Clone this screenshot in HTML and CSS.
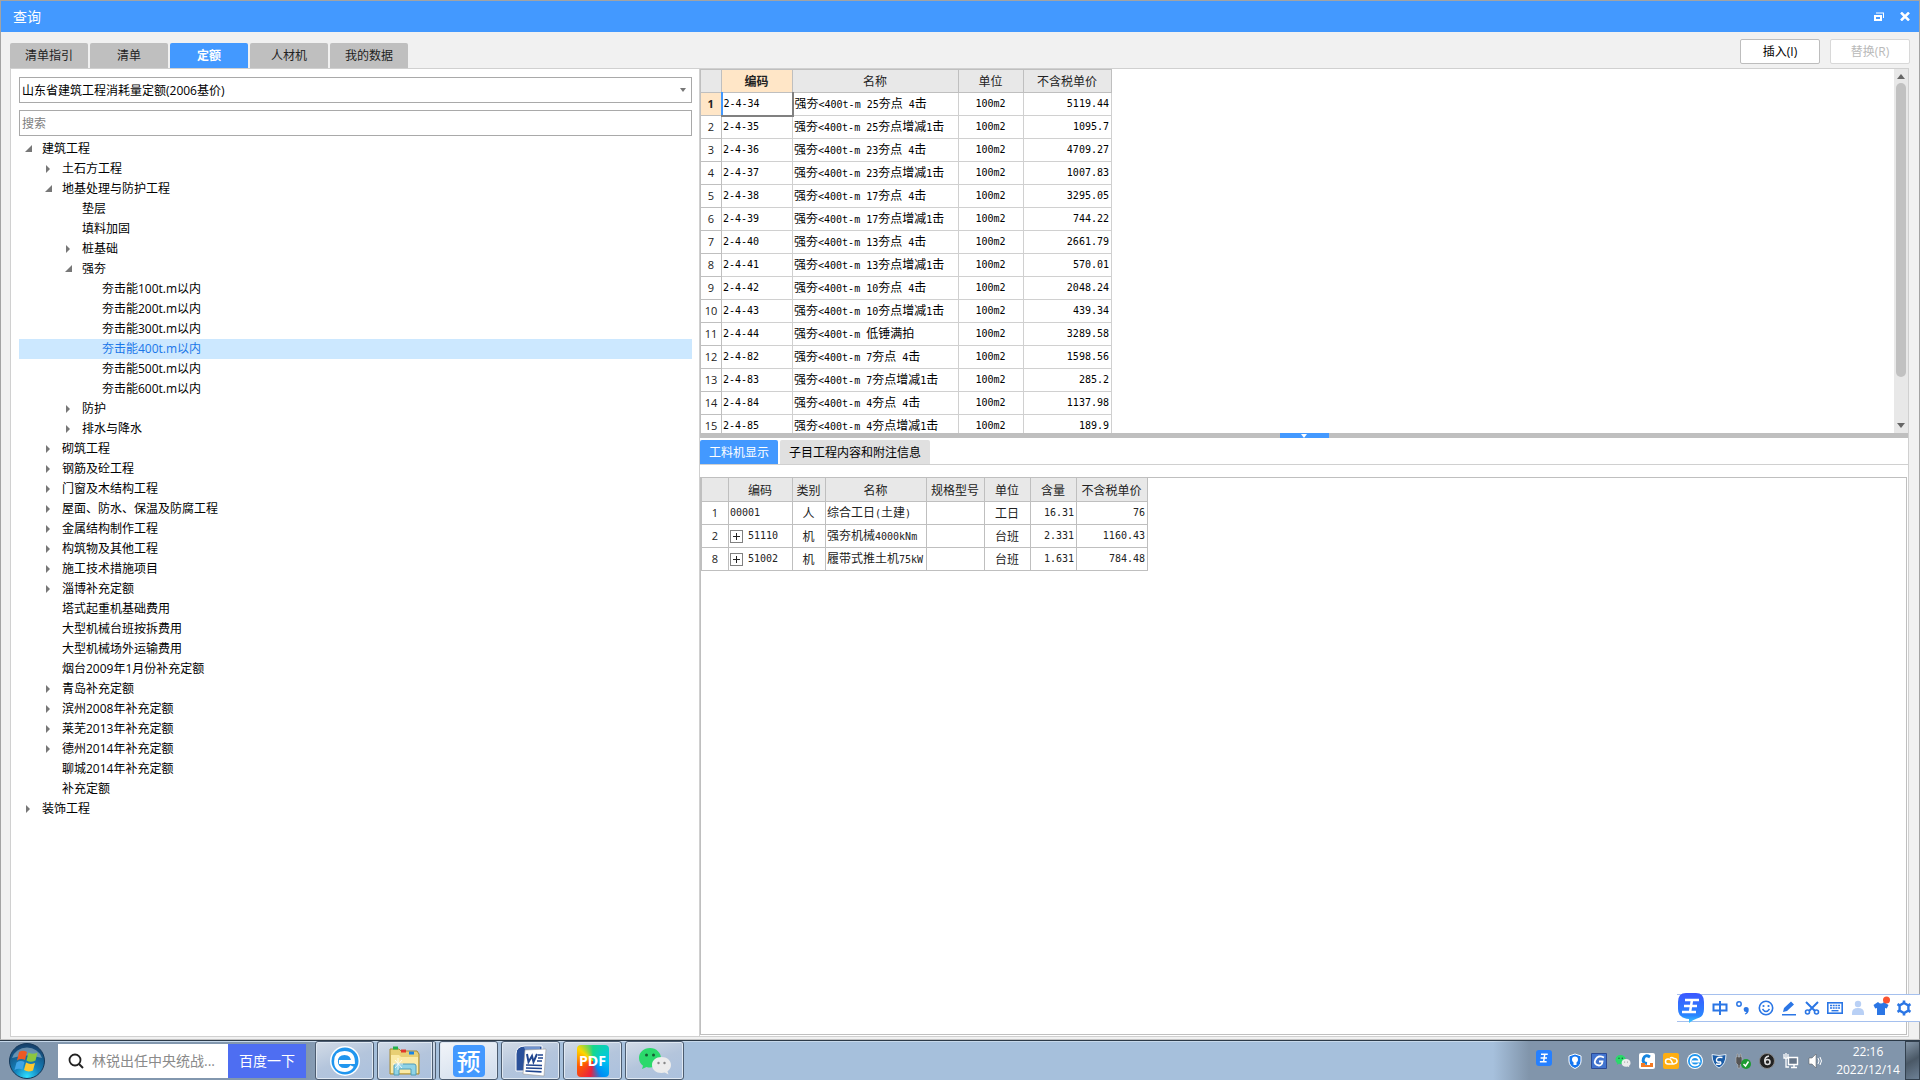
FILE: index.html
```html
<!DOCTYPE html>
<html lang="zh-CN">
<head>
<meta charset="utf-8">
<title>查询</title>
<link rel="stylesheet" href="styles.css">
</head>
<body>
<svg class="defs" aria-hidden="true">
  <symbol id="open" viewBox="0 0 8 8"><path d="M7 0v7H0z"/></symbol>
  <symbol id="shut" viewBox="0 0 8 8"><path d="M1 0l4 4-4 4z"/></symbol>
  <symbol id="wechat" viewBox="0 0 34 28">
    <path fill="#2bd96b" d="M12 1C5.500 1 1 5.500 1 11c0 3.500 1.600 6 4 7.800L4 22l4.500-2c1.100.4 2.300.5 3.500.5C18.500 20.500 23 16 23 11S18.500 1 12 1z"/>
    <circle cx="8.500" cy="8" r="1.500" fill="#155f33"/><circle cx="15.500" cy="8" r="1.500" fill="#155f33"/>
    <path fill="#ececec" d="M23.500 10C18 10 14 13.500 14 18s4 8 9.500 8c1.200 0 2.300-.2 3.300-.5l3.700 2-1-3.200c2.200-1.500 3.500-3.600 3.500-6.300 0-4.500-4-8-9.500-8z"/>
    <circle cx="20.500" cy="16" r="1.200" fill="#888"/><circle cx="26.500" cy="16" r="1.200" fill="#888"/>
  </symbol>
  <symbol id="wang" viewBox="0 0 16 16"><path d="M4 3h9M3.500 8h8.500M2.500 13h9M9 3L7.500 13" fill="none" stroke="#fff" stroke-width="2"/></symbol>
</svg>

<div class="window">
  <header class="titlebar">
    <h1>查询</h1>
    <div class="window-buttons">
      <button aria-label="还原"><svg width="10" height="9" viewBox="0 0 10 9"><path d="M2 1h8M9.500 1v5" fill="none" stroke="#fff" stroke-width="1"/><path d="M1 4h6v4H1z" fill="none" stroke="#fff" stroke-width="2"/></svg></button>
      <button aria-label="关闭"><svg width="10" height="9" viewBox="0 0 10 9"><path d="M1 0.500l8 8M9 0.500l-8 8" stroke="#fff" stroke-width="2.500"/></svg></button>
    </div>
  </header>

  <div class="toolbar">
    <nav class="tabs">
      <button>清单指引</button><button>清单</button><button class="active">定额</button><button>人材机</button><button>我的数据</button>
    </nav>
    <div class="actions">
      <button>插入(I)</button><button disabled>替换(R)</button>
    </div>
  </div>

  <main class="panes">
    <section class="left">
      <div class="combo">
        <select aria-label="定额库"><option>山东省建筑工程消耗量定额(2006基价)</option></select>
        <svg width="6" height="4" viewBox="0 0 6 4"><path d="M0 0h6L3 4z" fill="#777"/></svg>
      </div>
      <input class="search" type="text" placeholder="搜索" aria-label="搜索">
      <ul class="tree">
        <li class="l0"><svg><use href="#open"/></svg>建筑工程</li>
        <li class="l1"><svg><use href="#shut"/></svg>土石方工程</li>
        <li class="l1"><svg><use href="#open"/></svg>地基处理与防护工程</li>
        <li class="l2"><svg></svg>垫层</li>
        <li class="l2"><svg></svg>填料加固</li>
        <li class="l2"><svg><use href="#shut"/></svg>桩基础</li>
        <li class="l2"><svg><use href="#open"/></svg>强夯</li>
        <li class="l3"><svg></svg>夯击能100t.m以内</li>
        <li class="l3"><svg></svg>夯击能200t.m以内</li>
        <li class="l3"><svg></svg>夯击能300t.m以内</li>
        <li class="l3 selected"><svg></svg>夯击能400t.m以内</li>
        <li class="l3"><svg></svg>夯击能500t.m以内</li>
        <li class="l3"><svg></svg>夯击能600t.m以内</li>
        <li class="l2"><svg><use href="#shut"/></svg>防护</li>
        <li class="l2"><svg><use href="#shut"/></svg>排水与降水</li>
        <li class="l1"><svg><use href="#shut"/></svg>砌筑工程</li>
        <li class="l1"><svg><use href="#shut"/></svg>钢筋及砼工程</li>
        <li class="l1"><svg><use href="#shut"/></svg>门窗及木结构工程</li>
        <li class="l1"><svg><use href="#shut"/></svg>屋面、防水、保温及防腐工程</li>
        <li class="l1"><svg><use href="#shut"/></svg>金属结构制作工程</li>
        <li class="l1"><svg><use href="#shut"/></svg>构筑物及其他工程</li>
        <li class="l1"><svg><use href="#shut"/></svg>施工技术措施项目</li>
        <li class="l1"><svg><use href="#shut"/></svg>淄博补充定额</li>
        <li class="l1"><svg></svg>塔式起重机基础费用</li>
        <li class="l1"><svg></svg>大型机械台班按拆费用</li>
        <li class="l1"><svg></svg>大型机械场外运输费用</li>
        <li class="l1"><svg></svg>烟台2009年1月份补充定额</li>
        <li class="l1"><svg><use href="#shut"/></svg>青岛补充定额</li>
        <li class="l1"><svg><use href="#shut"/></svg>滨州2008年补充定额</li>
        <li class="l1"><svg><use href="#shut"/></svg>莱芜2013年补充定额</li>
        <li class="l1"><svg><use href="#shut"/></svg>德州2014年补充定额</li>
        <li class="l1"><svg></svg>聊城2014年补充定额</li>
        <li class="l1"><svg></svg>补充定额</li>
        <li class="l0"><svg><use href="#shut"/></svg>装饰工程</li>
      </ul>
    </section>

    <section class="right">
      <div class="quota">
        <div class="quota-grid">
          <table class="grid grid-top">
            <colgroup><col class="w-no"><col class="w-code"><col class="w-name"><col class="w-unit"><col class="w-price"></colgroup>
            <thead><tr><th></th><th class="current">编码</th><th>名称</th><th>单位</th><th>不含税单价</th></tr></thead>
            <tbody>
              <tr><th class="current">1</th><td class="mono focus">2-4-34</td><td>强夯<i>&lt;400t-m 25</i>夯点<i> 4</i>击</td><td class="mono mid">100m2</td><td class="mono num">5119.44</td></tr>
              <tr><th>2</th><td class="mono">2-4-35</td><td>强夯<i>&lt;400t-m 25</i>夯点增减<i>1</i>击</td><td class="mono mid">100m2</td><td class="mono num">1095.7</td></tr>
              <tr><th>3</th><td class="mono">2-4-36</td><td>强夯<i>&lt;400t-m 23</i>夯点<i> 4</i>击</td><td class="mono mid">100m2</td><td class="mono num">4709.27</td></tr>
              <tr><th>4</th><td class="mono">2-4-37</td><td>强夯<i>&lt;400t-m 23</i>夯点增减<i>1</i>击</td><td class="mono mid">100m2</td><td class="mono num">1007.83</td></tr>
              <tr><th>5</th><td class="mono">2-4-38</td><td>强夯<i>&lt;400t-m 17</i>夯点<i> 4</i>击</td><td class="mono mid">100m2</td><td class="mono num">3295.05</td></tr>
              <tr><th>6</th><td class="mono">2-4-39</td><td>强夯<i>&lt;400t-m 17</i>夯点增减<i>1</i>击</td><td class="mono mid">100m2</td><td class="mono num">744.22</td></tr>
              <tr><th>7</th><td class="mono">2-4-40</td><td>强夯<i>&lt;400t-m 13</i>夯点<i> 4</i>击</td><td class="mono mid">100m2</td><td class="mono num">2661.79</td></tr>
              <tr><th>8</th><td class="mono">2-4-41</td><td>强夯<i>&lt;400t-m 13</i>夯点增减<i>1</i>击</td><td class="mono mid">100m2</td><td class="mono num">570.01</td></tr>
              <tr><th>9</th><td class="mono">2-4-42</td><td>强夯<i>&lt;400t-m 10</i>夯点<i> 4</i>击</td><td class="mono mid">100m2</td><td class="mono num">2048.24</td></tr>
              <tr><th>10</th><td class="mono">2-4-43</td><td>强夯<i>&lt;400t-m 10</i>夯点增减<i>1</i>击</td><td class="mono mid">100m2</td><td class="mono num">439.34</td></tr>
              <tr><th>11</th><td class="mono">2-4-44</td><td>强夯<i>&lt;400t-m </i>低锤满拍</td><td class="mono mid">100m2</td><td class="mono num">3289.58</td></tr>
              <tr><th>12</th><td class="mono">2-4-82</td><td>强夯<i>&lt;400t-m 7</i>夯点<i> 4</i>击</td><td class="mono mid">100m2</td><td class="mono num">1598.56</td></tr>
              <tr><th>13</th><td class="mono">2-4-83</td><td>强夯<i>&lt;400t-m 7</i>夯点增减<i>1</i>击</td><td class="mono mid">100m2</td><td class="mono num">285.2</td></tr>
              <tr><th>14</th><td class="mono">2-4-84</td><td>强夯<i>&lt;400t-m 4</i>夯点<i> 4</i>击</td><td class="mono mid">100m2</td><td class="mono num">1137.98</td></tr>
              <tr><th>15</th><td class="mono">2-4-85</td><td>强夯<i>&lt;400t-m 4</i>夯点增减<i>1</i>击</td><td class="mono mid">100m2</td><td class="mono num">189.9</td></tr>
            </tbody>
          </table>
        </div>
        <div class="scrollbar">
          <svg width="8" height="5" viewBox="0 0 8 5"><path d="M4 0l4 5H0z"/></svg>
          <div class="track"><div class="thumb"></div></div>
          <svg width="8" height="5" viewBox="0 0 8 5"><path d="M0 0h8L4 5z"/></svg>
        </div>
      </div>
      <div class="splitter"><button aria-label="折叠"><svg width="6" height="4" viewBox="0 0 6 4"><path d="M0 0h6L3 4z" fill="#fff"/></svg></button></div>
      <nav class="subtabs"><button class="active">工料机显示</button><button>子目工程内容和附注信息</button></nav>
      <div class="detail">
        <table class="grid grid-bottom">
          <colgroup><col class="b-no"><col class="b-code"><col class="b-kind"><col class="b-name"><col class="b-spec"><col class="b-unit"><col class="b-qty"><col class="b-price"></colgroup>
          <thead><tr><th></th><th>编码</th><th>类别</th><th>名称</th><th>规格型号</th><th>单位</th><th>含量</th><th>不含税单价</th></tr></thead>
          <tbody>
            <tr><th>1</th><td class="mono">00001</td><td class="mid">人</td><td>综合工日<i>(</i>土建<i>)</i></td><td></td><td class="mid">工日</td><td class="mono num">16.31</td><td class="mono num">76</td></tr>
            <tr><th>2</th><td class="mono"><button class="plus" aria-label="展开"></button>51110</td><td class="mid">机</td><td>强夯机械<i>4000kNm</i></td><td></td><td class="mid">台班</td><td class="mono num">2.331</td><td class="mono num">1160.43</td></tr>
            <tr><th>8</th><td class="mono"><button class="plus" aria-label="展开"></button>51002</td><td class="mid">机</td><td>履带式推土机<i>75kW</i></td><td></td><td class="mid">台班</td><td class="mono num">1.631</td><td class="mono num">784.48</td></tr>
          </tbody>
        </table>
      </div>
    </section>
  </main>
</div>

<div class="ime">
  <svg class="ime-logo" width="28" height="32" viewBox="0 0 28 32">
    <defs><linearGradient id="ig" x1="0" y1="0" x2="0" y2="1"><stop offset="0" stop-color="#3b57ff"/><stop offset=".75" stop-color="#2a86ff"/><stop offset="1" stop-color="#3bd0ff"/></linearGradient></defs>
    <path fill="url(#ig)" d="M9 1h10q8 0 8 9v7q0 8-7 9.500-4 1-8 4.500v-4Q1 26 1 17v-7q0-9 8-9z"/>
    <path d="M8 8h14M7 14h13M5 20h14M15 8l-2 12" fill="none" stroke="#fff" stroke-width="2.500"/>
  </svg>
  <svg viewBox="0 0 16 16"><path d="M1.500 4.500h13v6h-13zM8 1v14" fill="none" stroke="#2b76e5" stroke-width="2"/></svg>
  <svg viewBox="0 0 16 16"><circle cx="4" cy="4" r="2.200" fill="none" stroke="#2b76e5" stroke-width="1.500"/><path fill="#2b76e5" d="M11 7a2.700 2.700 0 012.700 3c0 2.500-1.500 4-3.500 4.500l-.4-1c1-.4 1.500-1 1.600-1.500A2.500 2.500 0 1111 7z"/></svg>
  <svg viewBox="0 0 16 16"><circle cx="8" cy="8" r="6.700" fill="none" stroke="#2b76e5" stroke-width="1.600"/><circle cx="5.500" cy="6" r="1.100" fill="#2b76e5"/><circle cx="10.500" cy="6" r="1.100" fill="#2b76e5"/><path d="M4.500 9q3.500 5 7 0" fill="none" stroke="#2b76e5" stroke-width="1.500"/></svg>
  <svg viewBox="0 0 16 16"><path fill="#2b76e5" d="M2 12l1-4 7-6.500 3 3L6 11zM1 14h14v1.600H1z"/></svg>
  <svg viewBox="0 0 16 16"><path d="M2 2l9 9M14 2l-9 9" stroke="#2b76e5" stroke-width="2"/><circle cx="3.500" cy="12" r="2" fill="none" stroke="#2b76e5" stroke-width="1.600"/><circle cx="12.500" cy="12" r="2" fill="none" stroke="#2b76e5" stroke-width="1.600"/></svg>
  <svg viewBox="0 0 16 16"><rect x=".8" y="2.800" width="14.400" height="10.400" fill="none" stroke="#2b76e5" stroke-width="1.600"/><path d="M3 5.500h10M3 8h10" stroke="#2b76e5" stroke-width="1.500" stroke-dasharray="2 .7"/><path d="M4.500 10.700h7" stroke="#2b76e5" stroke-width="1.400"/></svg>
  <svg viewBox="0 0 16 16"><circle cx="8" cy="4" r="3.200" fill="#b9d0f5"/><path fill="#b9d0f5" d="M2 15v-2q0-5 6-5t6 5v2z"/></svg>
  <svg viewBox="0 0 16 16"><path fill="#2b76e5" d="M5 2q3 3 6 0l4.500 3-1.700 3.500L12 8v7H4V8l-1.800.5L.5 5z"/><circle cx="13.500" cy="0" r="3.500" fill="#fb5430"/></svg>
  <svg viewBox="0 0 16 16"><path d="M8 3l4.400 2.500v5L8 13l-4.400-2.500v-5z" fill="none" stroke="#2b76e5" stroke-width="2.400"/><path d="M8 .5v2M8 13.500v2M1.500 4.200l2 1.200M12.500 10.600l2 1.200M14.500 4.200l-2 1.200M3.500 10.600l-2 1.200" stroke="#2b76e5" stroke-width="2.600"/></svg>
</div>

<footer class="taskbar">
  <button class="start" aria-label="开始"><svg width="38" height="38" viewBox="0 0 38 38">
    <defs><radialGradient id="orb" cx=".5" cy=".95" r=".9"><stop offset="0" stop-color="#2fe0ff"/><stop offset=".4" stop-color="#1483bd"/><stop offset="1" stop-color="#17426d"/></radialGradient></defs>
    <circle cx="19" cy="19" r="17.500" fill="url(#orb)" stroke="#14385a"/><path d="M4 16a15.500 14 0 0130 0q-15-5-30 0z" fill="#fff" opacity=".35"/>
    <path fill="#ee5a24" d="M11 10q4-2.500 8 0l-2 8q-4-2-8 .5z"/><path fill="#8cc63f" d="M20.500 10.500q4 2.500 9 0l-2 8q-5 2.500-9 0z"/><path fill="#3fa4e6" d="M8.500 20.500q4-2.500 8-.5l-2 7.500q-4-1.500-8 .5z"/><path fill="#fdc82f" d="M18 20.500q4 2.500 9 .5l-2 7.500q-5 2-9-.5z"/>
  </svg></button>
  <div class="baidu">
    <svg width="16" height="16" viewBox="0 0 16 16"><circle cx="7" cy="7" r="5.500" fill="none" stroke="#222" stroke-width="1.800"/><path d="M11 11l4 4" stroke="#222" stroke-width="2"/></svg>
    <input type="text" placeholder="林锐出任中央统战..." aria-label="百度搜索">
    <button>百度一下</button>
  </div>
  <div class="apps">
    <button aria-label="浏览器"><svg width="32" height="32" viewBox="0 0 32 32"><circle cx="16" cy="16" r="15" fill="#fff"/><circle cx="16" cy="16" r="13.500" fill="#2196ee"/><path d="M10 17h14q0-9-8.500-9T7 16.500 16 25q5 0 7-4" fill="none" stroke="#fff" stroke-width="3.800"/></svg></button>
    <button class="stacked" aria-label="资源管理器"><svg width="34" height="30" viewBox="0 0 34 30"><path fill="#e8cf74" stroke="#a98b35" d="M2 3h9l2 2h16l2 3v20H2z"/><path d="M5 2h5" stroke="#21b14c" stroke-width="3"/><path d="M13 5h5" stroke="#e1382b" stroke-width="3"/><path d="M21 7h5" stroke="#1784e8" stroke-width="3"/><path fill="#fbeaa6" d="M3 9h8l2 2h17v16H3z"/><path fill="#8fd3e6" stroke="#4f9cb8" d="M6 29V20q0-2 2-2h18q2 0 2 2v9h-5v-6H11v6z"/><path d="M10 12v12M5 18h10M7 14l7 8M14 14l-7 8" stroke="#fff" stroke-width=".8"/></svg></button>
    <button class="yu"><span>预</span></button>
    <button aria-label="Word"><svg width="32" height="32" viewBox="0 0 32 32"><path fill="#2a5099" stroke="#fff" d="M1 26V9q0-8 9-8h17v25z"/><path fill="#6f93cf" d="M9 2h16v3H10z"/><path fill="#fff" stroke="#999" stroke-width=".6" d="M10 5l21-1-2 27-21-2z"/><path d="M12 9l1.500 8 3.500-6 1.500 6L22 9" fill="none" stroke="#21468f" stroke-width="2"/><path d="M23 10h5M23 13h5M22 16h5M11 20l16 .5M11 23l16 .5M10.500 26l16 .8" stroke="#21468f" stroke-width="1.700"/></svg></button>
    <button class="pdf"><span>PDF</span></button>
    <button aria-label="微信"><svg width="34" height="28"><use href="#wechat"/></svg></button>
  </div>
  <div class="tray">
    <svg class="lift" viewBox="0 0 16 16"><rect width="16" height="16" rx="3" fill="#2680ff"/><use href="#wang" x="2" y="2" width="12" height="12"/></svg>
    <svg viewBox="0 0 16 16"><path fill="#1677f0" stroke="#fff" d="M8 1l6 2v5q0 5-6 7.500Q2 13 2 8V3z"/><circle cx="8" cy="6.500" r="3" fill="#fff"/><path d="M6.500 7h3v5h-3z" fill="#fff"/></svg>
    <svg viewBox="0 0 16 16"><path fill="#4274cf" stroke="#2c4a94" d="M.5.500h15v15H.5z"/><path d="M13 4.500Q7 1.500 4.500 6.500T8 12.500q3 0 3.500-4H8" fill="none" stroke="#fff" stroke-width="1.800"/></svg>
    <svg viewBox="0 0 16 16"><use href="#wechat" y="1" width="16" height="14"/></svg>
    <svg viewBox="0 0 16 16"><rect width="16" height="16" rx="2" fill="#fff"/><path d="M11 4Q6 1 4.500 5.500T8 10.500" fill="none" stroke="#1685df" stroke-width="3"/><path fill="#f47a23" d="M2 10h4v2h5v-2h3v4H2z"/></svg>
    <svg viewBox="0 0 16 16"><rect width="16" height="16" rx="2" fill="#ffae12"/><path d="M10 11H5a2.500 2.500 0 010-5q3 0 4 3t3 1.500a2.500 2.500 0 00-1-5Q9 4 7 5" fill="none" stroke="#fff" stroke-width="1.500"/></svg>
    <svg viewBox="0 0 16 16"><circle cx="8" cy="8" r="8" fill="#fff"/><circle cx="8" cy="8" r="7" fill="#2196ee"/><path d="M5 8.500h7.500Q12 4 8 4T3.700 8 8 12.500q3 0 4-2" fill="none" stroke="#fff" stroke-width="1.800"/></svg>
    <svg viewBox="0 0 16 16"><path fill="#1b5da8" stroke="#dce9f5" d="M1 1.500q7 2 14 0 0 10-7 13.500Q1 11.500 1 1.500z"/><path d="M11.500 4.500Q6 3.500 5.500 6.500t4 2.500Q11 12 5 11" fill="none" stroke="#fff" stroke-width="1.400"/></svg>
    <svg viewBox="0 0 16 16"><path fill="#555" stroke="#bbb" stroke-width=".6" d="M2 4V1h1v3h2V1h1v3h1v6l-2 2v3H3v-3l-2-2V4z"/><circle cx="11" cy="11" r="5" fill="#1d9b31"/><path d="M8.500 11l2 2 3-4.500" fill="none" stroke="#fff" stroke-width="1.500"/></svg>
    <svg viewBox="0 0 16 16"><circle cx="8" cy="8" r="7.500" fill="#222" stroke="#888"/><path d="M10 3Q5 4 6 9" fill="none" stroke="#ddd" stroke-width="1.500"/><circle cx="8.500" cy="9" r="2.500" fill="none" stroke="#ddd" stroke-width="1.500"/></svg>
    <svg viewBox="0 0 16 16"><path d="M5.500 4.500h9v7h-9zM8 14.500h6M11 12v2" fill="#667689" stroke="#fff" stroke-width="1.400"/><path d="M1 1v4h4V1M3 0v4M3 5v9h3" fill="none" stroke="#fff" stroke-width="1.300"/></svg>
    <svg viewBox="0 0 16 16"><path fill="#fff" stroke="#555" stroke-width=".5" d="M2 5h3l4-4v14l-4-4H2z"/><path d="M11 5q2 3 0 6M13 4q3 4 0 8" fill="none" stroke="#fff"/></svg>
    <time><span>22:16</span><span>2022/12/14</span></time>
    <button class="desktop" aria-label="显示桌面"></button>
  </div>
</footer>
</body>
</html>
```
FILE: styles.css
```css
* { box-sizing: border-box; }
body {
  margin: 0;
  height: 100vh;
  display: flex;
  flex-direction: column;
  overflow: hidden;
  background: #f1f1f1;
  color: #000;
  font: 12px/20px "Open Sans", "Noto Sans CJK SC", sans-serif;
}
button, input, select { font: inherit; margin: 0; padding: 0; border: 0; border-radius: 0; }
svg { display: block; flex: none; }
.defs { position: absolute; width: 0; height: 0; }

/* window frame */
.window {
  flex: 1;
  min-height: 0;
  display: flex;
  flex-direction: column;
  border: 1px solid #a3a3a3;
  border-bottom-color: #c4c4c4;
}
.titlebar {
  height: 31px;
  display: flex;
  align-items: center;
  justify-content: space-between;
  padding: 0 9px 0 12px;
  background: #4399ff;
  color: #fff;
}
.titlebar h1 { margin: 0; font-size: 14px; font-weight: 400; }
.window-buttons { display: flex; gap: 16px; }
.window-buttons button { background: none; }

.toolbar {
  height: 36px;
  display: flex;
  justify-content: space-between;
  align-items: flex-end;
  padding: 0 9px;
}
.tabs { display: flex; gap: 2px; }
.tabs button {
  width: 78px;
  height: 25px;
  background: #bfbfbf;
  color: #222;
  border-radius: 2px 2px 0 0;
}
.tabs .active { background: #4399ff; color: #fff; font-weight: 700; }
.actions { display: flex; gap: 10px; padding-bottom: 4px; }
.actions button {
  width: 80px;
  height: 25px;
  background: #fff;
  border: 1px solid #bdbdbd;
  border-radius: 2px;
}
.actions button:disabled { color: #b9b9b9; border-color: #d8d8d8; }

/* panes */
.panes { flex: 1; min-height: 0; display: flex; margin: 0 10px 2px 9px; border: 1px solid #d0d0d0; background: #fff; }
.left { width: 689px; flex: none; padding: 8px 7px 0 8px; border-right: 1px solid #d0d0d0; }
.combo { display: flex; align-items: center; border: 1px solid #a9a9a9; height: 26px; padding-right: 5px; margin-bottom: 7px; }
.combo select { flex: 1; appearance: none; background: none; padding: 1px 0 0 2px; color: #000; }
.search { width: 100%; height: 26px; border: 1px solid #a9a9a9; padding-left: 2px; margin-bottom: 3px; display: block; }
.search::placeholder { color: #808080; }
.tree { margin: 0; padding: 0; list-style: none; }
.tree li { display: flex; align-items: center; height: 20px; padding-left: 6px; white-space: nowrap; }
.tree svg { width: 8px; height: 8px; margin-right: 9px; fill: #777; }
.tree .l1 { padding-left: 26px; }
.tree .l2 { padding-left: 46px; }
.tree .l3 { padding-left: 66px; }
.tree .selected { background: #cce8ff; color: #1a76e8; }

.right { flex: 1; min-width: 0; display: flex; flex-direction: column; }
.quota { flex: 0 0 364px; display: flex; overflow: hidden; }
.quota-grid { flex: 1; overflow: hidden; }
.scrollbar {
  width: 14px;
  display: flex;
  flex-direction: column;
  align-items: center;
  padding: 5px 0;
  gap: 4px;
  background: #e8e8e8;
  fill: #666;
}
.track { flex: 1; }
.thumb { width: 10px; height: 294px; border-radius: 5px; background: #c1c1c1; }
.splitter { height: 5px; display: flex; justify-content: center; background: #bfbfbf; }
.splitter button { width: 49px; height: 5px; display: flex; justify-content: center; align-items: center; background: #4399ff; }
.subtabs { display: flex; gap: 2px; padding-top: 2px; border-bottom: 1px solid #d0d0d0; }
.subtabs button { height: 24px; padding: 1px 9px 0; background: #e0e0e0; border-radius: 2px 2px 0 0; }
.subtabs .active { background: #4399ff; color: #fff; }
.detail { flex: 1; margin: 12px 1px 1px 0; border: 1px solid #bfbfbf; }

/* data grids */
.grid { table-layout: fixed; border-collapse: collapse; font: 12px/14px "Noto Sans CJK SC", sans-serif; }
.grid tr { height: 23px; }
.grid th, .grid td { padding: 0 2px 0 1px; border: 1px solid #d0d0d0; white-space: nowrap; overflow: hidden; text-align: left; }
.grid th { text-align: center; font-weight: 400; color: #222; border-color: #bfbfbf; }
.grid tbody th { padding: 0; font: 11px/14px "Open Sans", sans-serif; }
.grid thead th { background: #e8e8e8; }
.grid tbody .current, .grid thead .current { background: #ffe6c7; font-weight: 700; }
.grid .mono, .grid i { font-family: "DejaVu Sans Mono", monospace; font-size: 10px; font-style: normal; white-space: pre; }
.grid .mid { text-align: center; }
.grid .num { text-align: right; }
.grid .focus { border: 2px solid #808080; border-top: 1px solid #4399ff; border-left: 2px solid #4399ff; }
.grid-top { width: 411px; }
.grid-bottom { width: 446px; margin: -1px 0 0; }
.grid-bottom thead tr { height: 24px; }
.grid-bottom td { border-color: #bfbfbf; color: #222; }
.w-no { width: 21px; } .w-code { width: 71px; } .w-name { width: 166px; } .w-unit { width: 65px; } .w-price { width: 88px; }
.b-no { width: 27px; } .b-code { width: 64px; } .b-kind { width: 33px; } .b-name { width: 101px; }
.b-spec { width: 58px; } .b-unit { width: 46px; } .b-qty { width: 46px; } .b-price { width: 71px; }
.plus {
  width: 13px;
  height: 13px;
  margin-right: 5px;
  vertical-align: middle;
  border: 1px solid #808080;
  background:
    linear-gradient(#222, #222) center / 7px 1px no-repeat,
    linear-gradient(#222, #222) center / 1px 7px no-repeat,
    #fff;
}

/* floating input-method bar */
.ime {
  position: absolute;
  right: 0;
  bottom: 58px;
  height: 28px;
  display: flex;
  align-items: center;
  gap: 7px;
  padding-right: 8px;
  background: #fff;
  border: 1px solid #a5c0ee;
  border-width: 1px 0;
}
.ime svg { width: 16px; height: 16px; overflow: visible; }
.ime .ime-logo { width: 28px; height: 32px; }

/* taskbar */
.taskbar {
  height: 40px;
  flex: none;
  display: flex;
  align-items: center;
  border-top: 1px solid #2c3a48;
  box-shadow: inset 0 1px #c6d8ea;
  background: linear-gradient(90deg, #8297ae 0, #8297ae 306px, #a6c0dc 380px);
}
.start { background: none; padding: 0 12px 0 8px; }
.baidu { display: flex; align-items: center; height: 34px; width: 248px; background: #fff; margin-right: 9px; padding-left: 10px; gap: 8px; font-size: 14px; }
.baidu input { flex: 1; min-width: 0; background: none; }
.baidu input::placeholder { color: #8a8a8a; }
.baidu button { width: 78px; height: 34px; background: #4e6ef2; color: #fff; }
.apps { display: flex; gap: 3px; height: 39px; }
.apps button {
  width: 59px;
  display: flex;
  align-items: center;
  justify-content: center;
  border: 1px solid #4c5c70;
  border-radius: 3px;
  box-shadow: inset 0 0 0 1px #dfe8f2;
  background: linear-gradient(160deg, #d3dce7 0, #b4c5dc 50%, #abc1de 100%);
}
.apps .stacked { border-right: 4px double #4c5c70; }
.apps .yu { background: linear-gradient(160deg, #f2f5f9, #cfdcec); }
.apps span { width: 32px; height: 32px; border-radius: 4px; color: #fff; }
.yu span { background: #4399ff; font: 500 24px/32px "Noto Sans CJK SC", sans-serif; }
.pdf span {
  background: conic-gradient(#14d98c, #00c4f0 90deg, #008cf5 150deg, #e82040 190deg, #ff5a00 250deg, #ffd500 310deg, #14d98c);
  font: 700 14px/32px "Open Sans", sans-serif;
}
.tray {
  margin-left: auto;
  height: 39px;
  display: flex;
  align-items: center;
  padding-left: 43px;
  background: linear-gradient(90deg, transparent, #8195ab 36px);
  color: #fff;
}
.tray svg { width: 16px; height: 16px; margin-right: 8px; }
.tray .lift { margin: 0 15px 6px 0; }
.tray time { display: flex; flex-direction: column; align-items: center; width: 74px; line-height: 18px; }
.desktop { width: 15px; height: 39px; border: 1px solid #33414f; background: linear-gradient(150deg, #8496a8, #4a5866 50%, #6d8196); }
```
